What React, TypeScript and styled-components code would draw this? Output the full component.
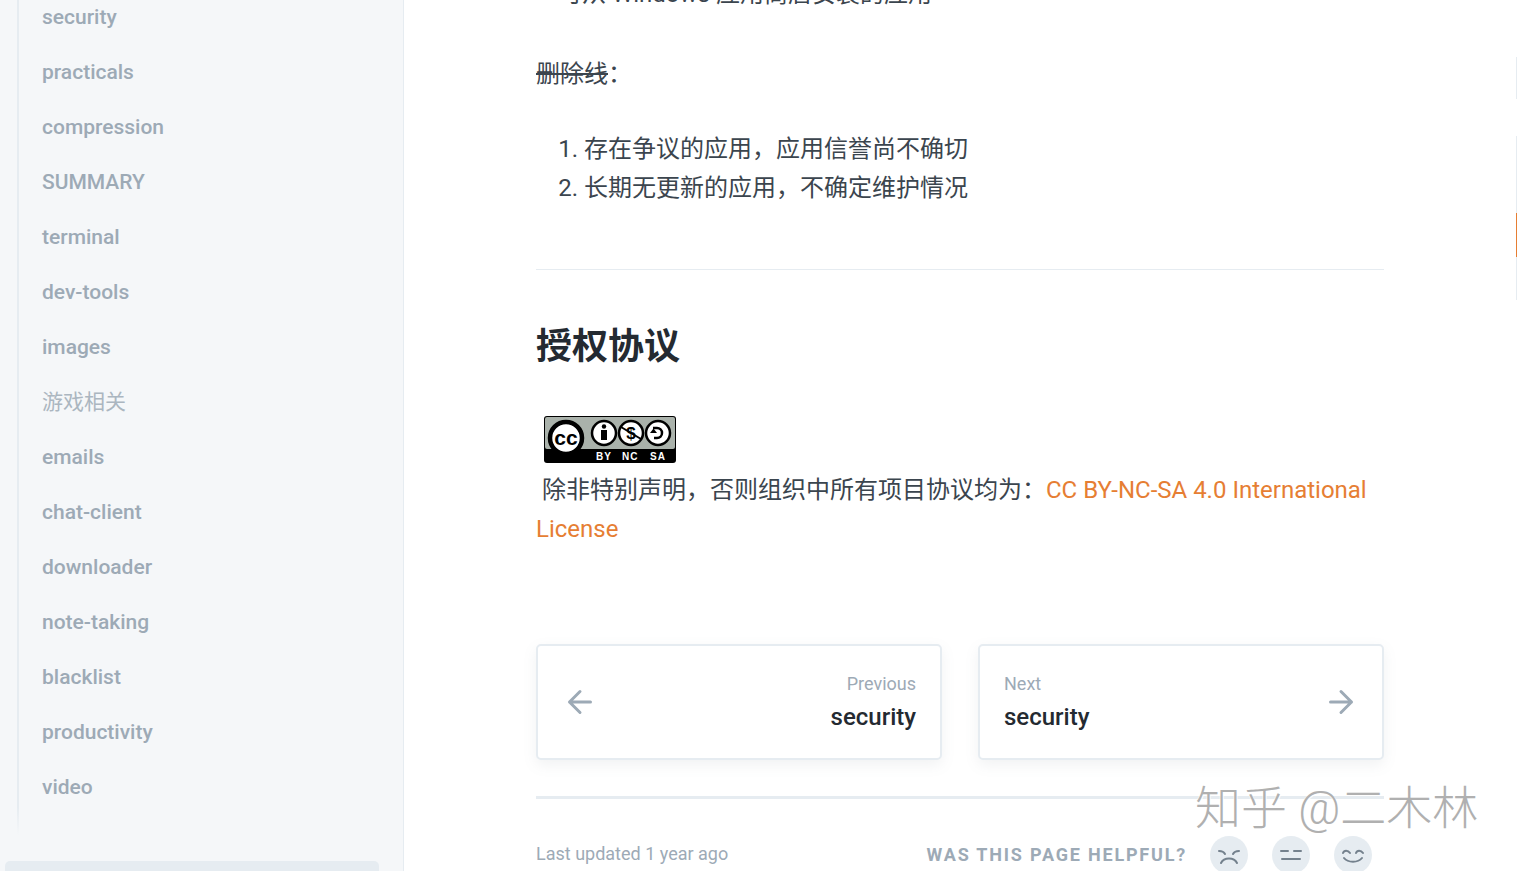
import React from 'react'
import styled, { createGlobalStyle } from 'styled-components'

const FONT = `Roboto, "Noto Sans CJK SC", sans-serif`

const GlobalStyle = createGlobalStyle`
  html, body {
    margin: 0;
    padding: 0;
    background: #fff;
    overflow: hidden;
  }
  body {
    font-family: ${FONT};
    color: #3b454e;
  }
`

const Page = styled.div`
  position: relative;
  display: flex;
  width: 100%;
  height: 871px;
  overflow: hidden;
`

const Sidebar = styled.aside`
  flex: 0 0 404px;
  box-sizing: border-box;
  height: 871px;
  display: flex;
  flex-direction: column;
  background: #f5f7f9;
  border-right: 1px solid #e6ecf1;
  overflow: hidden;
`

const ScrollArea = styled.div`
  position: relative;
  flex: 0 0 835px;
  padding-left: 17px;
  overflow: hidden;
`

const NavList = styled.nav`
  margin-top: -10px;
  padding-left: 23px;
  border-left: 2px solid #e6ecf1;
`

const NavItem = styled.div<{ $light?: boolean }>`
  height: 55px;
  line-height: 55px;
  font-size: 21px;
  font-weight: ${p => (p.$light ? 400 : 500)};
  color: ${p => (p.$light ? '#abb6c0' : '#9daab6')};
`

const Fade = styled.div`
  position: absolute;
  left: 0;
  right: 0;
  bottom: 0;
  height: 28px;
  background: linear-gradient(to bottom, rgba(245, 247, 249, 0), #f5f7f9);
`

const SidebarFooter = styled.div`
  margin: 26px 24px 0 5px;
  height: 20px;
  background: #e6ecf1;
  border-radius: 5px 5px 0 0;
`

const Main = styled.main`
  flex: 1;
  min-width: 0;
  padding: 0 132px;
`

const Article = styled.article`
  margin-top: -25px;
  font-size: 24px;
  line-height: 39px;
`

const Para = styled.p`
  margin: 0 0 36px;
`

const TopLine = styled(Para)`
  margin-bottom: 41px;
  padding-left: 22px;
`

const Numbered = styled.ol`
  margin: 0;
  padding-left: 48px;
`

const Rule = styled.hr`
  height: 1px;
  border: 0;
  margin: 61px 0 0;
  background: #e6ecf1;
`

const Heading = styled.h2`
  margin: 50px 0 0;
  font-size: 36px;
  line-height: 54px;
  font-weight: 700;
  color: #242a31;
`

const LicenseBlock = styled.div`
  margin-top: 42px;
`

const Badge = styled.svg`
  display: block;
  margin-left: 8px;
  margin-bottom: 8px;
`

const Link = styled.a`
  color: #e67e33;
  text-decoration: none;
`

const Pager = styled.div`
  display: grid;
  grid-template-columns: 1fr 1fr;
  gap: 36px;
  margin-top: 95px;
`

const PagerCard = styled.a<{ $next?: boolean }>`
  box-sizing: border-box;
  height: 116px;
  padding: ${p => (p.$next ? '0 23px 0 24px' : '0 24px')};
  display: flex;
  flex-direction: ${p => (p.$next ? 'row-reverse' : 'row')};
  align-items: center;
  justify-content: space-between;
  background: #fff;
  border: 2px solid #e6ecf1;
  border-radius: 5px;
  box-shadow: 0 5px 14px rgba(116, 129, 141, 0.1);
`

const PagerText = styled.div<{ $next?: boolean }>`
  text-align: ${p => (p.$next ? 'left' : 'right')};
`

const PagerLabel = styled.div`
  font-size: 18px;
  line-height: 27px;
  color: #9daab6;
`

const PagerTitle = styled.div`
  margin-top: 2px;
  font-size: 24px;
  line-height: 36px;
  font-weight: 500;
  color: #242a31;
`

const FooterRule = styled.hr`
  height: 3px;
  border: 0;
  margin: 36px 0 0;
  background: #e6ecf1;
`

const MetaRow = styled.div`
  display: flex;
  align-items: center;
  justify-content: space-between;
  margin-top: 36px;
`

const Updated = styled.span`
  margin-bottom: 2px;
  font-size: 18px;
  line-height: 36px;
  color: #9daab6;
`

const Helpful = styled.div`
  display: flex;
  align-items: center;
  margin-right: 12px;
`

const HelpfulLabel = styled.span`
  margin-right: 23px;
  font-size: 18px;
  font-weight: 700;
  letter-spacing: 1.8px;
  color: #9daab6;
`

const Face = styled.span`
  display: flex;
  align-items: center;
  justify-content: center;
  width: 38px;
  height: 38px;
  margin-right: 24px;
  border-radius: 50%;
  background: #e6ecf1;
  &:last-child {
    margin-right: 0;
  }
`

const Rail = styled.div`
  flex: 0 0 1px;
  padding-top: 57px;
`

const RailSegment = styled.div<{ $h: number; $active?: boolean; $gap?: number }>`
  height: ${p => p.$h}px;
  margin-top: ${p => p.$gap || 0}px;
  background: ${p => (p.$active ? '#e67e33' : '#e6ecf1')};
`

const Watermark = styled.div`
  position: absolute;
  left: 1195px;
  top: 773px;
  font-size: 46px;
  line-height: 70px;
  font-weight: 300;
  white-space: nowrap;
  color: #b0b0b0;
  text-shadow: 1px 1px 0 rgba(255, 255, 255, 0.9), -1px 0 0 rgba(255, 255, 255, 0.6);
`

const NAV = [
  'security',
  'practicals',
  'compression',
  'SUMMARY',
  'terminal',
  'dev-tools',
  'images',
  '游戏相关',
  'emails',
  'chat-client',
  'downloader',
  'note-taking',
  'blacklist',
  'productivity',
  'video',
]

function Arrow({ dir }: { dir: 'left' | 'right' }) {
  return (
    <svg width="36" height="36" viewBox="0 0 24 24" fill="none" stroke="#9daab6" strokeWidth="2" strokeLinecap="round" strokeLinejoin="round">
      {dir === 'left' ? <path d="M19 12H5M12 19l-7-7 7-7" /> : <path d="M5 12h14M12 5l7 7-7 7" />}
    </svg>
  )
}

function CcBadge() {
  return (
    <Badge width="132" height="47" viewBox="0 0 132 47">
      <rect width="132" height="47" rx="3" fill="#000" />
      <rect x="1" y="1" width="130" height="32" rx="2" fill="#aab2ab" />
      <circle cx="22" cy="22" r="16" fill="#fff" stroke="#000" strokeWidth="4.5" />
      <text x="22" y="29" textAnchor="middle" fontFamily="Liberation Sans, sans-serif" fontSize="21" fontWeight="700" fill="#000">cc</text>
      <circle cx="60" cy="17" r="12" fill="#fff" stroke="#000" strokeWidth="2.5" />
      <circle cx="60" cy="10.5" r="2.2" fill="#000" />
      <rect x="57" y="14" width="6" height="10" fill="#000" />
      <circle cx="87" cy="17" r="12" fill="#fff" stroke="#000" strokeWidth="2.5" />
      <text x="87" y="23" textAnchor="middle" fontFamily="Liberation Sans, sans-serif" fontSize="17" fontWeight="700" fill="#000">$</text>
      <path d="M77 11l20 12" stroke="#000" strokeWidth="2" />
      <circle cx="114" cy="17" r="12" fill="#fff" stroke="#000" strokeWidth="2.5" />
      <path d="M109 12h4a5 5 0 0 1 0 10h-3" fill="none" stroke="#000" strokeWidth="2.5" />
      <path d="M106 17h7l-3.500 -4.500z" fill="#000" />
      <text x="52" y="44" fontFamily="Liberation Sans, sans-serif" fontSize="10" fontWeight="700" letterSpacing="1" fill="#fff">BY</text>
      <text x="78" y="44" fontFamily="Liberation Sans, sans-serif" fontSize="10" fontWeight="700" letterSpacing="1" fill="#fff">NC</text>
      <text x="106" y="44" fontFamily="Liberation Sans, sans-serif" fontSize="10" fontWeight="700" letterSpacing="1" fill="#fff">SA</text>
    </Badge>
  )
}

function FaceIcon({ d }: { d: string }) {
  return (
    <Face>
      <svg width="26" height="24" viewBox="0 0 26 24" fill="none" stroke="#74818d" strokeWidth="2" strokeLinecap="round">
        <path d={d} />
      </svg>
    </Face>
  )
}

export default function App() {
  return (
    <Page>
      <GlobalStyle />
      <Sidebar>
        <ScrollArea>
          <NavList>
            {NAV.concat('').map((name, i) => (
              <NavItem key={i} $light={name === '游戏相关'}>{name}</NavItem>
            ))}
          </NavList>
          <Fade />
        </ScrollArea>
        <SidebarFooter />
      </Sidebar>
      <Main>
        <Article>
          <TopLine>可从 Windows 应用商店安装的应用</TopLine>
          <Para>
            <del>删除线</del>：
          </Para>
          <Numbered>
            <li>存在争议的应用，应用信誉尚不确切</li>
            <li>长期无更新的应用，不确定维护情况</li>
          </Numbered>
          <Rule />
          <Heading>授权协议</Heading>
          <LicenseBlock>
            <CcBadge />
            &nbsp;除非特别声明，否则组织中所有项目协议均为：
            <Link>CC BY-NC-SA 4.0 International License</Link>
          </LicenseBlock>
          <Pager>
            <PagerCard>
              <Arrow dir="left" />
              <PagerText>
                <PagerLabel>Previous</PagerLabel>
                <PagerTitle>security</PagerTitle>
              </PagerText>
            </PagerCard>
            <PagerCard $next>
              <Arrow dir="right" />
              <PagerText $next>
                <PagerLabel>Next</PagerLabel>
                <PagerTitle>security</PagerTitle>
              </PagerText>
            </PagerCard>
          </Pager>
          <FooterRule />
          <MetaRow>
            <Updated>Last updated 1 year ago</Updated>
            <Helpful>
              <HelpfulLabel>WAS THIS PAGE HELPFUL?</HelpfulLabel>
              <FaceIcon d="M3 8c3 0 5 1 6 3M23 8c-3 0-5 1-6 3M5 20c3-6 13-6 16 0" />
              <FaceIcon d="M3 8h7M16 8h7M4 16h18" />
              <FaceIcon d="M3 10c1-3 5-3 7 0M16 10c1-3 5-3 7 0M4 15c4 5 14 5 18 0" />
            </Helpful>
          </MetaRow>
        </Article>
      </Main>
      <Rail>
        <RailSegment $h={42} />
        <RailSegment $h={77} $gap={37} />
        <RailSegment $h={44} $active />
        <RailSegment $h={43} />
      </Rail>
      <Watermark>知乎 @二木林</Watermark>
    </Page>
  )
}
